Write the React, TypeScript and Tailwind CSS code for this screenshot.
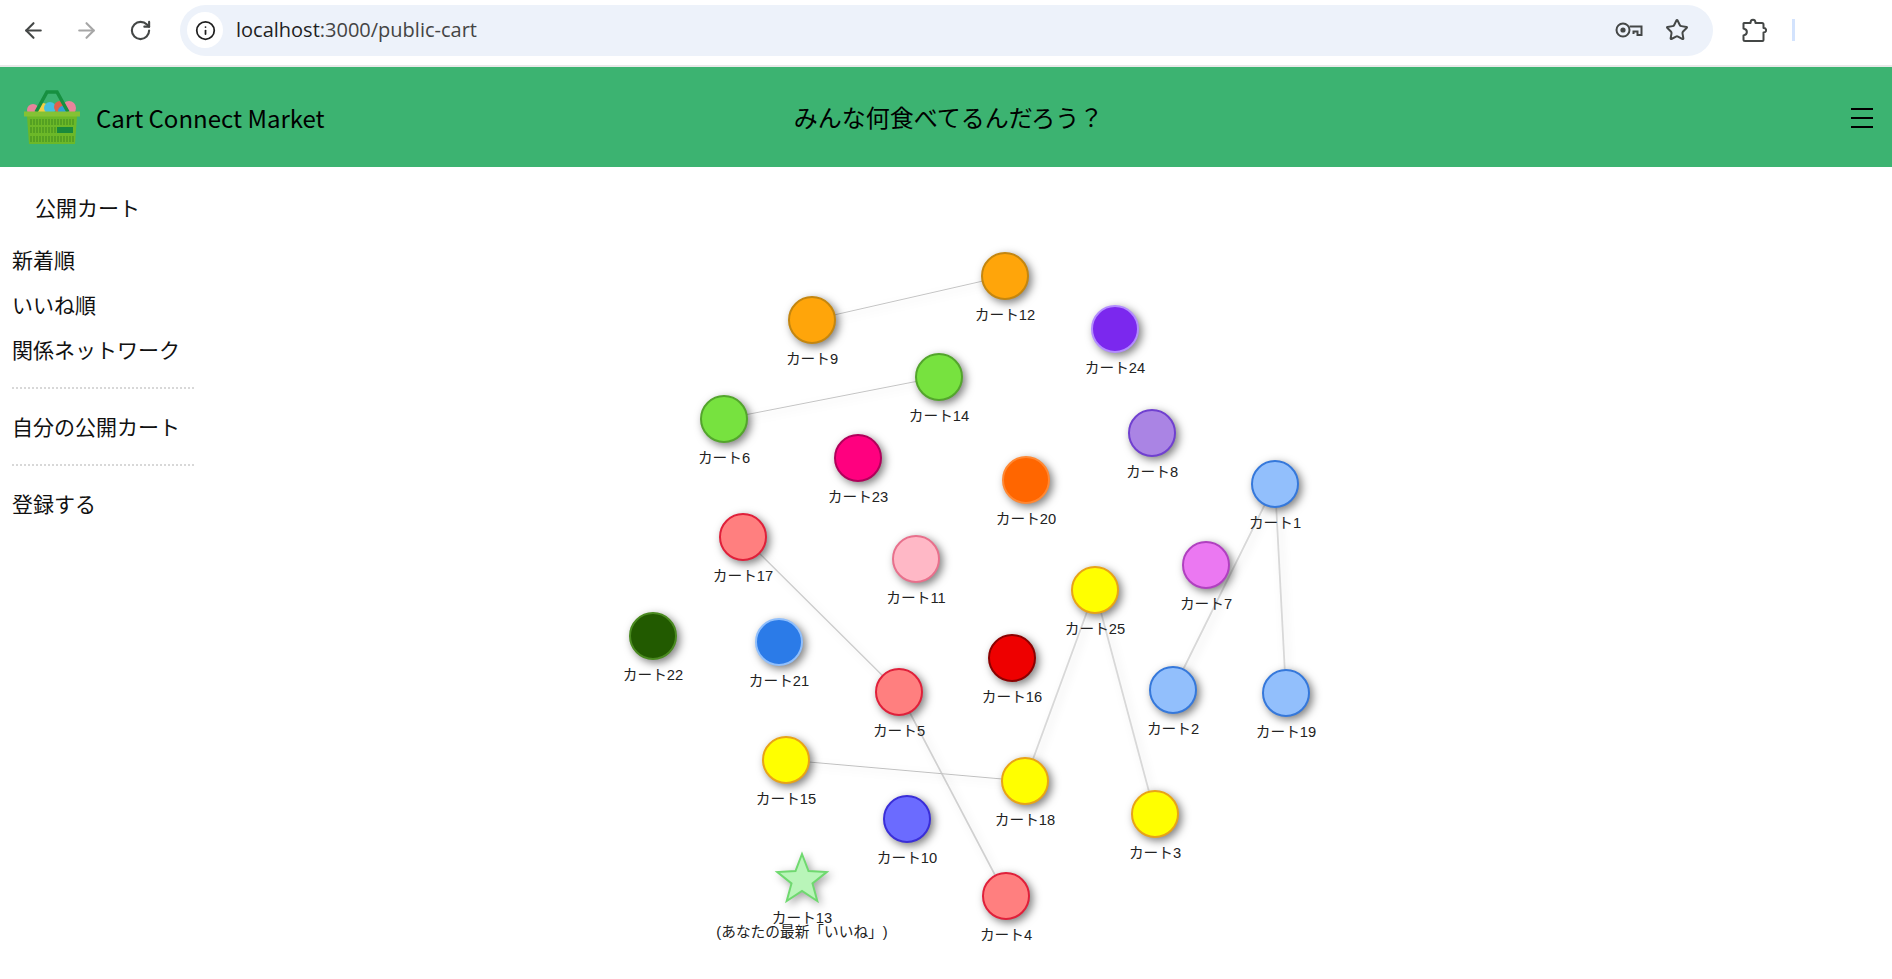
import { ArrowLeft, ArrowRight, Info, RotateCw, Star } from "lucide-react";

const JP = "font-['Liberation_Sans','Noto_Sans_CJK_JP',sans-serif]";

type CartNode = {
  id: number;
  x: number;
  y: number;
  fill: string;
  stroke: string;
};

const ORANGE = { fill: "#ffa50a", stroke: "#c4860f" };
const GREEN = { fill: "#77e23f", stroke: "#53a52c" };
const BLUE = { fill: "#92bffc", stroke: "#3578db" };
const YELLOW = { fill: "#ffff00", stroke: "#e8a317" };
const RED = { fill: "#ff7f7f", stroke: "#e0203a" };

const nodes: CartNode[] = [
  { id: 1, x: 1275, y: 484, ...BLUE },
  { id: 2, x: 1173, y: 690, ...BLUE },
  { id: 3, x: 1155, y: 814, ...YELLOW },
  { id: 4, x: 1006, y: 896, ...RED },
  { id: 5, x: 899, y: 692, ...RED },
  { id: 6, x: 724, y: 419, ...GREEN },
  { id: 7, x: 1206, y: 565, fill: "#eb78f2", stroke: "#b040c0" },
  { id: 8, x: 1152, y: 433, fill: "#aa84e4", stroke: "#7040d0" },
  { id: 9, x: 812, y: 320, ...ORANGE },
  { id: 10, x: 907, y: 819, fill: "#6b6bff", stroke: "#3a2ed8" },
  { id: 11, x: 916, y: 559, fill: "#ffb8c6", stroke: "#e8708c" },
  { id: 12, x: 1005, y: 276, ...ORANGE },
  { id: 14, x: 939, y: 377, ...GREEN },
  { id: 15, x: 786, y: 760, ...YELLOW },
  { id: 16, x: 1012, y: 658, fill: "#ee0000", stroke: "#8b0000" },
  { id: 17, x: 743, y: 537, ...RED },
  { id: 18, x: 1025, y: 781, ...YELLOW },
  { id: 19, x: 1286, y: 693, ...BLUE },
  { id: 20, x: 1026, y: 480, fill: "#ff6600", stroke: "#ff8833" },
  { id: 21, x: 779, y: 642, fill: "#2b7be8", stroke: "#90bffc" },
  { id: 22, x: 653, y: 636, fill: "#225a00", stroke: "#4a8a20" },
  { id: 23, x: 858, y: 458, fill: "#ff007f", stroke: "#b0005a" },
  { id: 24, x: 1115, y: 329, fill: "#7b28ee", stroke: "#b38cff" },
  { id: 25, x: 1095, y: 590, ...YELLOW },
];

const links: [number, number, number, string][] = [
  [9, 12, 1, "#c4c4c4"],
  [6, 14, 1, "#c4c4c4"],
  [17, 5, 1.3, "#cccccc"],
  [5, 4, 1.7, "#d0d0d0"],
  [15, 18, 1, "#c0c0c0"],
  [18, 25, 1.8, "#d8d8d8"],
  [25, 3, 1.8, "#d8d8d8"],
  [1, 2, 1.8, "#d8d8d8"],
  [1, 19, 1.8, "#d8d8d8"],
];

const byId = (id: number) => nodes.find((n) => n.id === id)!;

const CartLogo = () => {
  const slots = [];
  for (let i = 0; i < 15; i++) {
    const x = 31 + i * 3;
    slots.push(<line key={`a${i}`} x1={x} y1={119} x2={x} y2={125} />);
    if (x < 56) slots.push(<line key={`b${i}`} x1={x} y1={127} x2={x} y2={133} />);
    slots.push(<line key={`c${i}`} x1={x} y1={136} x2={x} y2={142} />);
  }
  return (
    <svg width="70" height="66" viewBox="20 85 70 66" className="shrink-0">
      <circle cx="33" cy="110" r="6" fill="#e8849b" />
      <circle cx="69" cy="108" r="7" fill="#e8849b" />
      <circle cx="43" cy="109" r="6" fill="#f2cf45" />
      <circle cx="50" cy="108" r="6" fill="#45bfe0" />
      <circle cx="60" cy="107" r="6" fill="#e0604a" />
      <circle cx="63" cy="111" r="5" fill="#2f9fd8" />
      <path d="M36 112 L47 92 H57 L68 112" fill="none" stroke="#169040" strokeWidth="3.5" />
      <path d="M27 116 H77 L75 144 H29 Z" fill="#6cb828" />
      <rect x="24" y="111.5" width="56" height="5" fill="#84c234" />
      <g stroke="#3c8a1c" strokeWidth="1">{slots}</g>
      <rect x="57" y="127" width="16" height="6" fill="#198a3c" />
    </svg>
  );
};

const KeyIcon = () => (
  <svg width="28" height="16" viewBox="0 0 28 16" fill="none" stroke="#444746" strokeWidth="2">
    <circle cx="8" cy="8" r="6.5" />
    <circle cx="8" cy="8" r="2.6" fill="#444746" stroke="none" />
    <path d="M14.5 4.5 H26.5 V13 H22.5 V9.5 H18.5 V12" />
  </svg>
);

const PuzzleIcon = () => (
  <svg width="26" height="26" viewBox="0 0 26 26" fill="none" stroke="#444746" strokeWidth="2" strokeLinejoin="round">
    <path d="M3 6 H9.5 C9.5 1.5 14.5 1.5 14.5 6 H21 a1.5 1.5 0 0 1 1.5 1.5 V11 C26 11 26 15.5 22.5 15.5 V23 a1 1 0 0 1 -1 1 H4 a1.5 1.5 0 0 1 -1.5 -1.5 V18.5 C7 17.5 7 12.5 2.5 11.5 V6.5 Z" />
  </svg>
);

const BrowserBar = () => (
  <div className="h-[67px] shrink-0 flex items-center bg-white border-b-2 border-[#e9e9e9] pb-[5px]">
    <div className="flex items-center pl-[7px] w-[180px]">
      <div className="w-[53px] flex justify-center text-[#444746]"><ArrowLeft size={25} strokeWidth={2} /></div>
      <div className="w-[53px] flex justify-center text-[#a6a6a6]"><ArrowRight size={25} strokeWidth={2} /></div>
      <div className="w-[54px] flex justify-center text-[#444746]"><RotateCw size={23} strokeWidth={2.2} /></div>
    </div>
    <div className="w-[1533px] h-[51px] rounded-full bg-[#edf2fa] flex items-center pl-[7px] pr-[24px]">
      <div className="w-[36px] h-[36px] rounded-full bg-white flex items-center justify-center text-[#1f1f1f]">
        <Info size={21} strokeWidth={2} />
      </div>
      <span className="ml-[13px] text-[20px] text-[#444] font-['Open_Sans',sans-serif]">
        <span className="text-[#1f1f1f]">localhost</span>:3000/public-cart
      </span>
      <div className="ml-auto flex items-center gap-[22px] text-[#444746]">
        <KeyIcon />
        <Star size={24} strokeWidth={2} />
      </div>
    </div>
    <div className="ml-[28px] flex items-center gap-[25px]">
      <PuzzleIcon />
      <div className="w-[3px] h-[22px] bg-[#d3e3fd]" />
    </div>
  </div>
);

const Header = () => (
  <header className="h-[100px] shrink-0 bg-[#3cb371] flex items-center pt-[2px] text-black">
    <div className="flex-1 flex items-center pl-[20px]">
      <CartLogo />
      <span className="ml-[6px] text-[24px] font-['Noto_Sans_CJK_JP',sans-serif]">Cart Connect Market</span>
    </div>
    <div className={`ml-[4px] pt-[2px] text-[24px] ${JP}`}>みんな何食べてるんだろう？</div>
    <div className="flex-1 flex justify-end pr-[19px]">
      <svg width="22" height="22" viewBox="0 0 22 22" stroke="black" strokeWidth="2">
        <line x1="0" y1="2" x2="22" y2="2" />
        <line x1="0" y1="11" x2="22" y2="11" />
        <line x1="0" y1="20" x2="22" y2="20" />
      </svg>
    </div>
  </header>
);

const Sidebar = () => (
  <aside className={`w-[206px] shrink-0 pl-[12px] pt-[27px] text-[21px] leading-[30px] text-[#111] ${JP}`}>
    <div className="pl-[23px]">公開カート</div>
    <div className="mt-[22px]">新着順</div>
    <div className="mt-[15px]">いいね順</div>
    <div className="mt-[15px]">関係ネットワーク</div>
    <div className="mt-[21px] w-[182px] border-t-2 border-dotted border-[#d8d8d8]" />
    <div className="mt-[24px]">自分の公開カート</div>
    <div className="mt-[21px] w-[182px] border-t-2 border-dotted border-[#d8d8d8]" />
    <div className="mt-[24px]">登録する</div>
  </aside>
);

const NetworkChart = () => (
  <svg viewBox="206 167 1686 812" className={`flex-1 h-[812px] ${JP}`}>
    {links.map(([a, b, w, color]) => (
      <line
        key={`${a}-${b}`}
        x1={byId(a).x}
        y1={byId(a).y}
        x2={byId(b).x}
        y2={byId(b).y}
        stroke={color}
        strokeWidth={w}
        className="[filter:drop-shadow(3px_3px_4px_rgba(0,0,0,0.12))]"
      />
    ))}
    {nodes.map((n) => (
      <g key={n.id}>
        <circle
          cx={n.x}
          cy={n.y}
          r={23}
          fill={n.fill}
          stroke={n.stroke}
          strokeWidth={2}
          className="[filter:drop-shadow(3px_3px_4px_rgba(0,0,0,0.5))]"
        />
        <text x={n.x} y={n.y + 44} textAnchor="middle" fontSize="14.7" fill="#222">
          カート{n.id}
        </text>
      </g>
    ))}
    <polygon
      points="802,854 808.5,871.1 826.7,872 812.5,883.4 817.3,901 802,891 786.7,901 791.5,883.4 777.3,872 795.5,871.1"
      fill="#b9f5b9"
      stroke="#6fd96f"
      strokeWidth={2}
      className="[filter:drop-shadow(3px_3px_4px_rgba(0,0,0,0.35))]"
    />
    <text x={802} y={923} textAnchor="middle" fontSize="14.7" fill="#222">カート13</text>
    <text x={802} y={937} textAnchor="middle" fontSize="14.7" fill="#222" className="[text-spacing-trim:space-all]">(あなたの最新「いいね」)</text>
  </svg>
);

export default function App() {
  return (
    <div className="h-screen overflow-hidden bg-white flex flex-col">
      <BrowserBar />
      <Header />
      <div className="flex flex-1">
        <Sidebar />
        <NetworkChart />
      </div>
    </div>
  );
}
